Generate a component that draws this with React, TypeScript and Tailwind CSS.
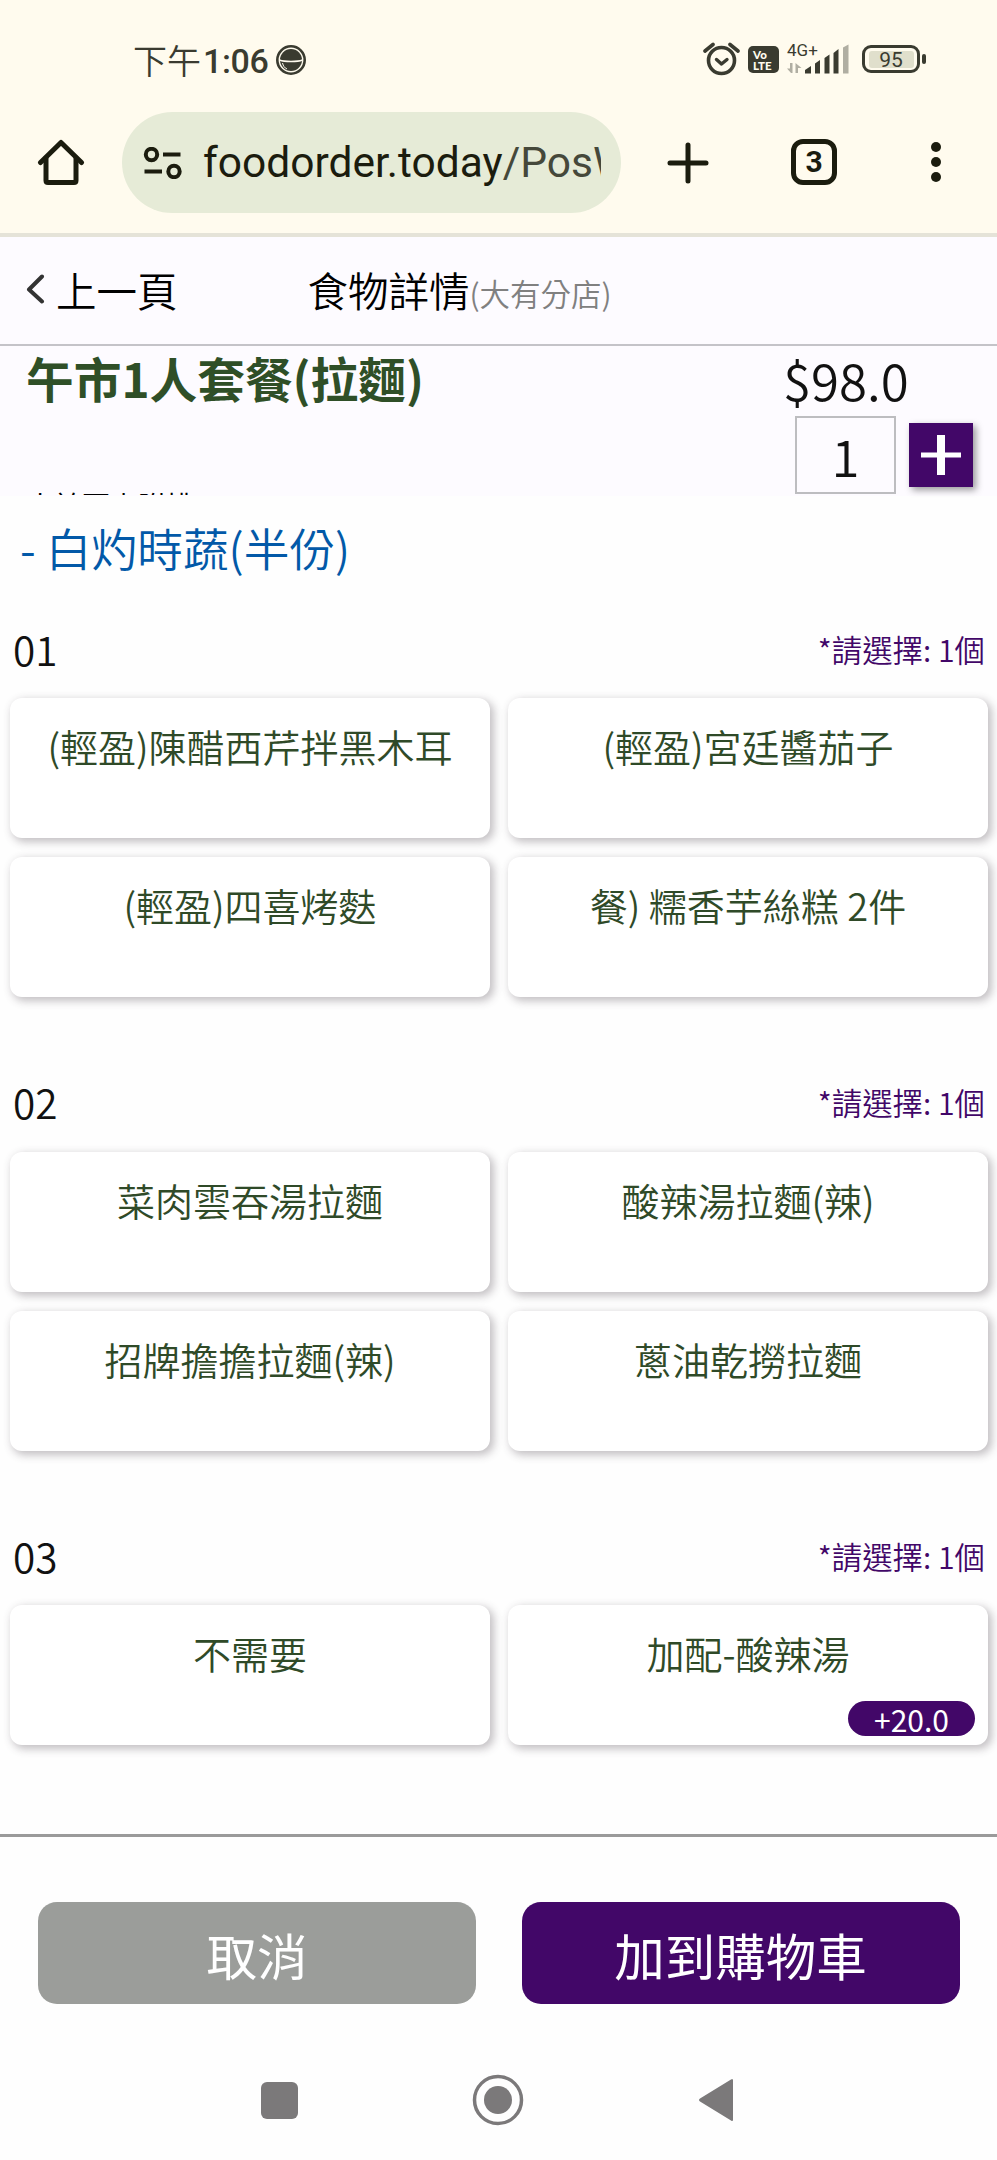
import { useState } from "react";

type Option = { name: string; extra?: string };

const groups: { no: string; options: Option[] }[] = [
  {
    no: "01",
    options: [
      { name: "(輕盈)陳醋西芹拌黑木耳" },
      { name: "(輕盈)宮廷醬茄子" },
      { name: "(輕盈)四喜烤麩" },
      { name: "餐) 糯香芋絲糕 2件" },
    ],
  },
  {
    no: "02",
    options: [
      { name: "菜肉雲吞湯拉麵" },
      { name: "酸辣湯拉麵(辣)" },
      { name: "招牌擔擔拉麵(辣)" },
      { name: "蔥油乾撈拉麵" },
    ],
  },
  {
    no: "03",
    options: [{ name: "不需要" }, { name: "加配-酸辣湯", extra: "+20.0" }],
  },
];

function StatusBar() {
  return (
    <div className="flex h-[102px] items-start justify-between pl-[133px] pr-[71px] font-[Roboto,'Noto_Sans_CJK_TC',sans-serif] text-[#3a3b30]">
      <div className="flex h-[119px] items-center">
        <span className="font-['Noto_Sans_CJK_TC',sans-serif] text-[34px] font-[350] leading-none">下午</span>
        <span className="ml-[2px] mt-[2px] text-[34px] font-medium leading-none tracking-[-0.4px]">1:06</span>
        <svg className="ml-[8px]" width="30" height="30" viewBox="0 0 30 30">
          <circle cx="15" cy="15" r="13.7" fill="none" stroke="currentColor" strokeWidth="2.6" />
          <circle cx="15" cy="15" r="11" fill="currentColor" />
          <path d="M3.5 15c5 2 18 2 23 0" fill="none" stroke="#fffbee" strokeWidth="1.5" />
          <path d="M6.5 18c.7 3 2 4.800 4.500 6" fill="none" stroke="#fffbee" strokeWidth="1" />
        </svg>
      </div>
      <div className="flex h-[118px] items-center">
        <svg width="37" height="34" viewBox="0 0 37 34" fill="none" stroke="currentColor">
          <circle cx="18.500" cy="18.500" r="13" strokeWidth="3.600" />
          <path d="M2 9 10 2.500M35 9 27 2.500" strokeWidth="3.600" strokeLinecap="round" />
          <path d="m13.500 17.500 5 4.500 5.500-4.500" strokeWidth="3.400" strokeLinecap="round" strokeLinejoin="round" />
        </svg>
        <div className="ml-[8px] mt-px flex h-[27px] w-[31px] flex-col justify-center rounded-[5px] bg-[#3a3b30] pl-[5px] font-[Lato,sans-serif] text-[11.5px] font-black leading-[11px] text-[#fffbee]">
          <span>Vo</span>
          <span>LTE</span>
        </div>
        <div className="relative ml-[8px] h-[34px] w-[63px]">
          <span className="absolute left-0 top-0 text-[17px] leading-none">4G+</span>
          <svg className="absolute inset-0" width="63" height="34" viewBox="0 0 63 34" fill="currentColor">
            <path d="M5.500 21v10h-1.500l-4-4.500h3v-5.500zM8.500 31v-10l6 5h-3.500v5z" opacity=".4" />
            <path d="M18 28l6-4v7.500h-6zM28 21.500l5-3.500v13.500h-5zM37.500 16l5-3.500v19h-5zM46.500 11l5-4v24.500h-5z" />
            <path d="M56 5.500l5.500-3v29h-5.500z" opacity=".4" />
          </svg>
        </div>
        <div className="ml-[12px] flex h-[28px] w-[58px] items-center justify-center rounded-[9px] border-[3px] border-[#3a3b30]">
          <div className="flex h-[17px] w-[45px] items-center justify-center rounded-[3px] bg-[#e0dfcc] pt-[2px] text-[21px] leading-none">95</div>
        </div>
        <div className="ml-[2px] h-[10px] w-[4px] rounded-[2px] bg-[#3a3b30]" />
      </div>
    </div>
  );
}

function BrowserBar() {
  return (
    <div className="flex h-[131px] items-start pt-[10px] font-[Roboto,sans-serif] text-[#1b1c0e]">
      <svg className="ml-[37px] mt-[25px] shrink-0" width="48" height="50" viewBox="0 0 48 50" fill="none" stroke="currentColor" strokeWidth="5" strokeLinecap="round" strokeLinejoin="round">
        <path d="M3.500 25.500 24 5.500l20.500 20" />
        <path d="M9 21v22.500q0 2 2 2h26q2 0 2-2v-22.500" />
      </svg>
      <div className="ml-[37px] flex h-[101px] w-[499px] shrink-0 items-center rounded-full bg-[#e6ebd7] pl-[21px]">
        <svg width="39" height="32" viewBox="0 0 39 32" fill="none" stroke="currentColor" strokeWidth="4">
          <circle cx="8.500" cy="7.500" r="5.700" />
          <path d="M20 7.500h17.500M1.500 24.500h17.500" />
          <circle cx="31" cy="24.500" r="5.700" />
        </svg>
        <div className="ml-[21px] w-[398px] overflow-hidden whitespace-nowrap text-[42.500px] leading-[60px]">
          foodorder.today<span className="text-[#45483a]">/PosWeb</span>
        </div>
      </div>
      <svg className="ml-[46px] mt-[30px] shrink-0" width="42" height="42" viewBox="0 0 42 42" stroke="currentColor" strokeWidth="5" strokeLinecap="round">
        <path d="M21 3v36M3 21h36" />
      </svg>
      <div className="ml-[82px] mt-[27px] flex h-[46px] w-[46px] shrink-0 items-center justify-center rounded-[12px] border-[5px] border-[#1b1c0e] text-[30px] font-bold leading-none">3</div>
      <div className="ml-[94px] mt-[30px] flex flex-col gap-[5px]">
        <i className="size-[10px] rounded-full bg-[#1b1c0e]" />
        <i className="size-[10px] rounded-full bg-[#1b1c0e]" />
        <i className="size-[10px] rounded-full bg-[#1b1c0e]" />
      </div>
    </div>
  );
}

function OptionCard({ option }: { option: Option }) {
  return (
    <button className="relative flex h-[140px] justify-center rounded-[12px] bg-white pt-[20px] text-[38px] leading-[56px] text-[#2f4a28] shadow-[3px_3px_8px_1px_rgba(60,50,60,0.3)]">
      {option.name}
      {option.extra && (
        <span className="absolute bottom-[9px] right-[13px] flex h-[35px] w-[127px] items-center justify-center rounded-full bg-[#420768] text-[30px] font-normal leading-none text-white">
          {option.extra}
        </span>
      )}
    </button>
  );
}

export default function App() {
  const [qty, setQty] = useState(1);

  return (
    <div className="flex h-[2160px] w-[997px] flex-col overflow-hidden bg-[#fefefe] font-['Noto_Sans_CJK_TC',sans-serif] font-[350]">
      <div className="h-[237px] shrink-0 border-b-4 border-[#e5e3d8] bg-[#fffbee] font-normal">
        <StatusBar />
        <BrowserBar />
      </div>

      <header className="flex h-[109px] shrink-0 items-center border-b-2 border-[#c4c3c8] bg-[#fdfbff] text-[40.500px] leading-[60px] text-black">
        <svg className="ml-[26px] mt-[-3px]" width="19" height="30" viewBox="0 0 19 30" fill="none" stroke="#333" strokeWidth="4" strokeLinecap="round" strokeLinejoin="round">
          <path d="M16 2.500 3 15.500l13 12" />
        </svg>
        <span className="ml-[11px] mt-[-2px]">上一頁</span>
        <span className="ml-[130px] mt-[-2px]">食物詳情</span>
        <span className="mt-[5px] text-[30.500px] text-[#808080]">(大有分店)</span>
      </header>

      <section className="flex h-[150px] shrink-0 justify-between bg-[#fdfbff]">
        <div className="flex flex-col justify-between pb-px pl-[26px]">
          <h1 className="pt-[2px] text-[47.700px] font-bold leading-[60px] text-[#2f4f27]">午市1人套餐(拉麵)</h1>
          <div className="h-[3px] overflow-hidden text-[28px] font-normal leading-[27px] text-black">小於百少附排</div>
        </div>
        <div className="flex w-[212px] flex-col text-[51px] text-[#111]">
          <div className="h-[70px] -translate-x-[2px] leading-[66px]">$98.0</div>
          <div className="flex items-start">
            <div className="ml-[10px] flex h-[78px] w-[101px] items-center justify-center border-2 border-[#bdbdc0]">{qty}</div>
            <button
              className="ml-[13px] mt-[7px] flex size-[64px] items-center justify-center bg-[#420768] shadow-[3px_3px_7px_rgba(0,0,0,0.4)]"
              onClick={() => setQty(qty + 1)}
            >
              <svg width="40" height="40" viewBox="0 0 40 40" fill="#fff">
                <path d="M16 0h8v40h-8z" />
                <path d="M0 17.500h40v5h-40z" />
              </svg>
            </button>
          </div>
        </div>
      </section>

      <main className="h-[1338px] shrink-0 overflow-hidden">
        <p className="h-[108px] pl-[20px] pt-[16px] text-[45.700px] leading-[70px] text-[#0259a8]">- 白灼時蔬(半份)</p>
        {groups.map((group) => (
          <section key={group.no} className="h-[453.500px]">
            <div className="flex h-[94px] items-center justify-between pl-[13px] pr-[12px]">
              <span className="mt-[-5px] text-[40.500px] leading-[60px] text-[#111]">{group.no}</span>
              <span className="mt-[-3px] text-[30.400px] text-[#420768]">*請選擇: 1個</span>
            </div>
            <div className="grid grid-cols-2 gap-x-[18px] gap-y-[19px] pl-[10px] pr-[9px]">
              {group.options.map((option) => (
                <OptionCard key={option.name} option={option} />
              ))}
            </div>
          </section>
        ))}
      </main>

      <footer className="flex h-[230px] shrink-0 justify-center gap-[46px] border-t-[3px] border-[#9a9a9a] pt-[65px] text-[50.500px] font-normal leading-none text-white">
        <button className="h-[102px] w-[438px] rounded-[19px] bg-[#9b9d9a] pl-px pt-[2px]">取消</button>
        <button className="h-[102px] w-[438px] rounded-[19px] bg-[#420768] pt-[2px]">加到購物車</button>
      </footer>

      <nav className="flex items-center pl-[261px] pt-[10px] text-[#7b797a]">
        <div className="h-[37px] w-[37px] rounded-[6px] bg-[#7b797a]" />
        <svg className="ml-[174px]" width="52" height="52" viewBox="0 0 52 52">
          <circle cx="26" cy="26" r="23.500" fill="none" stroke="currentColor" strokeWidth="3.500" />
          <circle cx="26" cy="26" r="14" fill="currentColor" />
        </svg>
        <svg className="ml-[174px]" width="36" height="44" viewBox="0 0 36 44" fill="currentColor">
          <path d="M33 1.500q2-1.500 2 1v39q0 2.500-2 1L2 23.500q-2-1.500 0-3z" />
        </svg>
      </nav>
    </div>
  );
}
